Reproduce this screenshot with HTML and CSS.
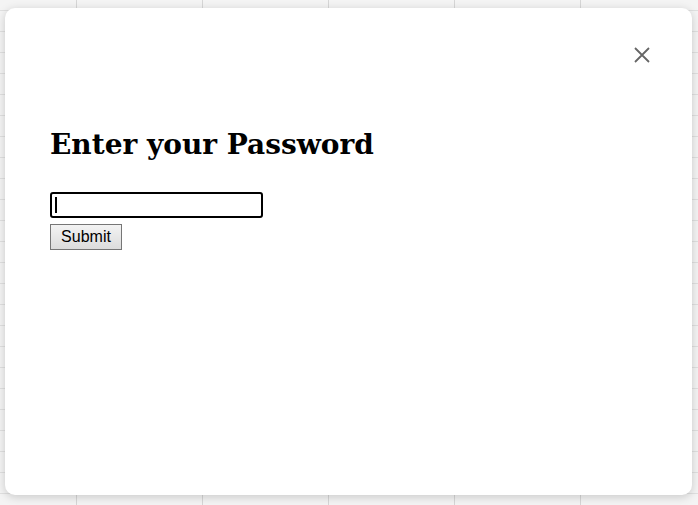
FILE: index.html
```html
<!DOCTYPE html>
<html>
<head>
<meta charset="utf-8">
<link rel="stylesheet" href="styles.css">
</head>
<body>
<div class="backdrop">
  <div class="modal">
    <button class="close" aria-label="Close">
      <svg width="16" height="16" viewBox="0 0 16 16"><path d="M1 1L15 15M15 1L1 15" stroke="#666" stroke-width="1.8" fill="none"/></svg>
    </button>
    <h1 class="title">Enter your Password</h1>
    <form class="form">
      <span class="field"><input class="pw" type="password"><span class="caret"></span></span>
      <button class="submit" type="button">Submit</button>
    </form>
  </div>
</div>
</body>
</html>
```
FILE: styles.css
```css
html, body { margin: 0; padding: 0; }
body { width: 698px; height: 505px; overflow: hidden; }
.backdrop {
  width: 698px; height: 505px;
  box-sizing: border-box;
  padding: 8px 6px 10px 5px;
  background-color: #f4f4f4;
  background-image:
    linear-gradient(to right, #d6d6d6 1px, transparent 1px),
    linear-gradient(to bottom, #e0e0e0 1px, transparent 1px);
  background-size: 126px 21px, 126px 21px;
  background-position: 76px 0, 0 10px;
}
.modal {
  position: relative;
  height: 487px;
  background: #fff;
  border-radius: 10px;
  box-shadow: 0 2px 10px rgba(0,0,0,0.18);
  box-sizing: border-box;
  padding: 120px 45px 0 45px;
}
.close {
  position: absolute; top: 39px; right: 42px;
  width: 16px; height: 16px; padding: 0; border: 0; background: none;
  display: flex;
}
.title {
  margin: 0 0 30px 0;
  font-family: "DejaVu Serif", Georgia, serif;
  font-weight: bold;
  font-size: 28px;
  line-height: 34px;
  color: #000;
}
.form { display: flex; flex-direction: column; align-items: flex-start; gap: 6px; }
.field { position: relative; display: flex; }
.pw {
  width: 213px; height: 26px; box-sizing: border-box;
  border: 2px solid #000; border-radius: 3px; margin: 0; padding: 0 4px;
  outline: none; background: #fff;
}
.caret { position: absolute; left: 5px; top: 5px; width: 2px; height: 16px; background: #000; }
.submit {
  width: 72px; height: 26px; box-sizing: border-box; margin: 0;
  font-family: "Liberation Sans", Arial, sans-serif; font-size: 16px; color: #000;
  border: 1px solid #767676; border-radius: 0;
  background: linear-gradient(#f3f3f3, #dcdcdc);
  padding: 0;
}
```
